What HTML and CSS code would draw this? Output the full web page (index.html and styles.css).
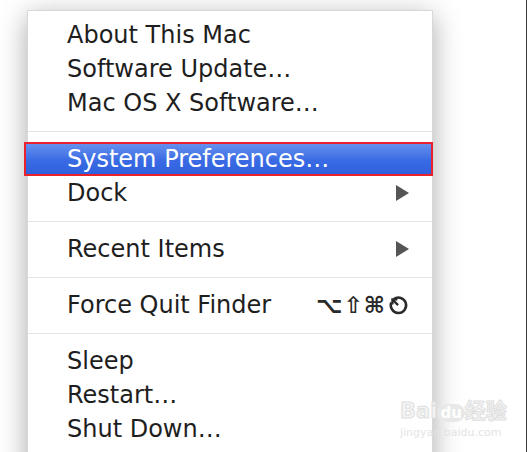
FILE: index.html
```html
<!DOCTYPE html>
<html lang="en">
<head>
<meta charset="UTF-8" />
<meta name="viewport" content="width=device-width, initial-scale=1" />
<title>Apple Menu</title>
<link rel="stylesheet" href="styles.css">
</head>
<body>

<div class="page">
  <div class="menu">
    <div class="item">About This Mac</div>
    <div class="item">Software Update…</div>
    <div class="item">Mac OS X Software…</div>
    <div class="sep"></div>
    <div class="item selected">System Preferences…</div>
    <div class="item">Dock <span class="arrow"></span></div>
    <div class="sep"></div>
    <div class="item">Recent Items <span class="arrow"></span></div>
    <div class="sep"></div>
    <div class="item">Force Quit Finder
      <span class="keys">⌥⇧⌘<svg class="esc" width="21" height="21" viewBox="0 0 20 20">
        <path d="M5.6 3.9 A7.3 7.3 0 1 1 3.1 7.2" fill="none" stroke="#2a2a2a" stroke-width="2.4"/>
        <path d="M9.6 9.6 L5.2 5.2 M4.2 9 L4.2 4.2 L9 4.2" fill="none" stroke="#2a2a2a" stroke-width="2.2"/>
      </svg></span>
    </div>
    <div class="sep"></div>
    <div class="item">Sleep</div>
    <div class="item">Restart…</div>
    <div class="item">Shut Down…</div>
  </div>

  <div class="watermark">
    <div class="wm-logo">Bai<span class="paw">du</span>经验</div>
    <div class="wm-url">jingyan.baidu.com</div>
  </div>
</div>

</body>
</html>
```

FILE: styles.css
```css
html, body {
  margin: 0; padding: 0;
  background: #fff;
  overflow: hidden;
}
.page {
  position: relative;
  width: 527px;
  height: 452px;
  box-sizing: border-box;
  border-right: 1px solid #3a3a3a;
  padding: 10px 0 0 27px;
  overflow: hidden;
}
.menu {
  width: 406px;
  box-sizing: border-box;
  background: #fff;
  border: 1px solid #d8d8d8;
  padding: 7px 0 40px;
  box-shadow: 0 6px 26px rgba(0, 0, 0, 0.34);
  font-family: "DejaVu Sans", "Liberation Sans", sans-serif;
  font-size: 24px;
  color: #1e1e1e;
}
.item {
  display: flex;
  align-items: center;
  height: 34px;
  line-height: 34px;
  padding: 0 23px 0 39px;
  white-space: nowrap;
}
.selected {
  box-sizing: border-box;
  margin: 0 -1px 0 -4px;
  padding-left: 41px;
  line-height: 28px;
  border: 2px solid #e8212b;
  background: linear-gradient(#6690ee, #3a6be4 55%, #2f60de);
  color: #fff;
}
.sep {
  height: 22px;
  display: flex;
  align-items: center;
}
.sep::before {
  content: "";
  flex: 1;
  height: 1px;
  background: #e4e4e4;
}
.arrow {
  margin-left: auto;
  width: 0; height: 0;
  border-top: 8px solid transparent;
  border-bottom: 8px solid transparent;
  border-left: 13px solid #555;
}
.keys {
  margin-left: auto;
  display: flex;
  align-items: center;
  font-size: 23px;
  font-weight: bold;
  letter-spacing: 1px;
  color: #2a2a2a;
}
.esc {
  margin-left: 2px;
}
.watermark {
  position: absolute;
  left: 400px;
  top: 394px;
  width: 110px;
  white-space: nowrap;
  font-family: "DejaVu Sans", "Noto Sans CJK SC", sans-serif;
  pointer-events: none;
}
.wm-logo {
  font-size: 21px;
  font-weight: bold;
  color: #f4f4f4;
  -webkit-text-stroke: 1px #e0e0e0;
}
.paw {
  display: inline-block;
  font-size: 15px;
  padding: 0 3px;
  border-radius: 9px;
  background: #e8e8e8;
  color: #fff;
  -webkit-text-stroke: 0;
}
.wm-url {
  font-size: 11px;
  color: #e4e4e4;
  margin-top: 2px;
}
```
